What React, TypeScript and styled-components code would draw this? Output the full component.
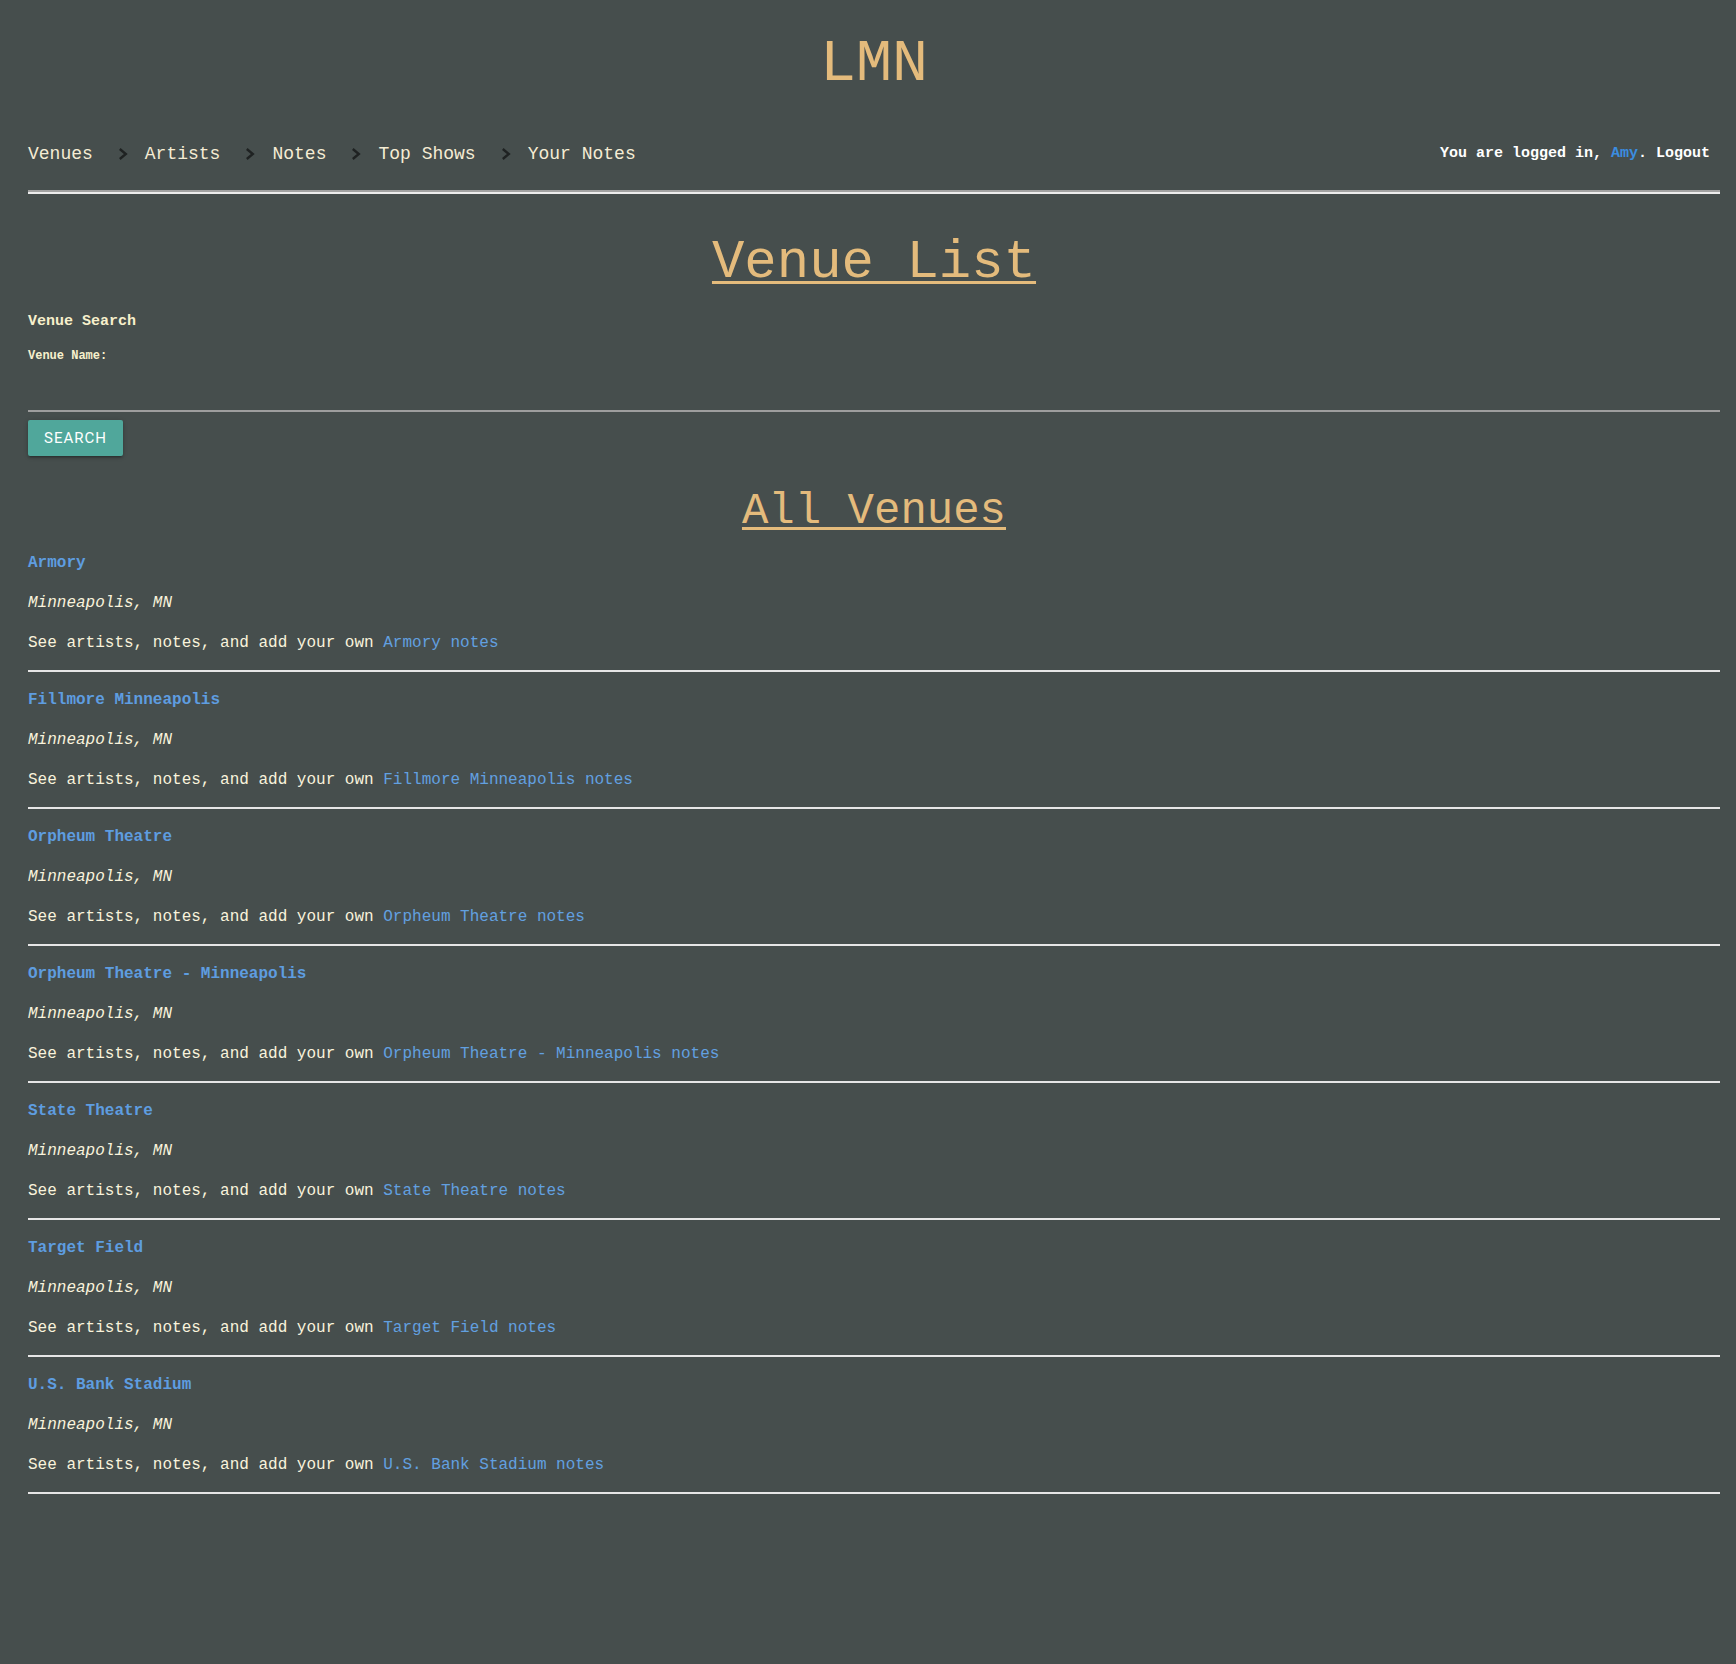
import React from "react";
import styled, { createGlobalStyle } from "styled-components";

const GlobalStyle = createGlobalStyle`
  html, body {
    margin: 0;
    padding: 0;
    background: #464e4d;
  }
  body {
    font-family: "Courier New", "Liberation Mono", monospace;
    color: #f9f3dc;
    min-height: 100vh;
  }
  * { box-sizing: border-box; }
`;

const Page = styled.div`
  padding: 0 16px 60px 28px;
  min-height: 100vh;
  background: #464e4d;
`;

const SiteTitle = styled.h1`
  margin: 30px 0 0;
  font-size: 60px;
  line-height: 68px;
  font-weight: normal;
  text-align: center;
  color: #e4bb7c;
`;

const Nav = styled.nav`
  display: flex;
  align-items: center;
  justify-content: space-between;
  padding: 44px 0 24px;
  border-bottom: 2px solid #a2a2a2;
  box-shadow: 0 2px 0 #ececec;
`;

const Crumbs = styled.div`
  display: flex;
  align-items: center;
  height: 24px;
`;

const Crumb = styled.a`
  font-size: 18px;
  line-height: 24px;
  color: #f5ecd4;
  text-decoration: none;
  white-space: pre;
`;

const Chevron = styled.svg`
  width: 10px;
  height: 12px;
  margin: 0 17px 0 25px;
  flex: none;
`;

const Login = styled.div`
  font-size: 15px;
  line-height: 24px;
  font-weight: bold;
  color: #ffffff;
  margin-right: 10px;
  white-space: pre;
`;

const UserName = styled.span`
  color: #3b8de0;
`;

const LogoutLink = styled.a`
  color: #ffffff;
  text-decoration: none;
`;

const SectionTitle = styled.h2<{ $size: number; $lh: number; $mt: number }>`
  margin: ${(p) => p.$mt}px 0 0;
  font-size: ${(p) => p.$size}px;
  line-height: ${(p) => p.$lh}px;
  font-weight: normal;
  text-align: center;
  color: #e4bb7c;
`;

const Underlined = styled.span`
  text-decoration: underline;
  text-decoration-thickness: 3px;
  text-underline-offset: 4px;
`;

const SearchForm = styled.form`
  display: block;
  margin: 0;
`;

const SearchTitle = styled.div`
  margin-top: 19px;
  font-size: 15px;
  line-height: 20px;
  font-weight: bold;
  color: #f7f0cc;
`;

const FieldLabel = styled.label`
  display: block;
  margin-top: 16px;
  font-size: 12px;
  line-height: 16px;
  font-weight: bold;
  color: #f7f0cc;
`;

const TextInput = styled.input`
  display: block;
  width: 100%;
  height: 46px;
  box-sizing: content-box;
  padding: 0;
  margin: 0;
  border: none;
  border-bottom: 2px solid #9e9e9e;
  background: transparent;
  color: #f9f3dc;
  font-family: inherit;
  font-size: 16px;
  outline: none;
`;

const SearchButton = styled.button`
  display: block;
  margin-top: 8px;
  height: 36px;
  padding: 0 16px;
  border: none;
  border-radius: 2px;
  background: #50a79b;
  color: #ffffff;
  font-family: Roboto, "Liberation Sans", sans-serif;
  font-size: 15px;
  letter-spacing: 1px;
  text-transform: uppercase;
  line-height: 36px;
  box-shadow: 0 2px 2px 0 rgba(0, 0, 0, 0.14), 0 3px 1px -2px rgba(0, 0, 0, 0.12),
    0 1px 5px 0 rgba(0, 0, 0, 0.2);
  cursor: pointer;
`;

const VenueList = styled.div`
  margin-top: 0;
`;

const VenueItem = styled.div`
  padding: 8px 0 7px;
  border-bottom: 2px solid #e6e6e6;
`;

const Line = styled.div`
  font-size: 16px;
  line-height: 40px;
  white-space: pre;
`;

const VenueName = styled(Line)`
  font-weight: bold;
  color: #5e9de0;
`;

const VenueCity = styled(Line)`
  font-style: italic;
  color: #f9f3dc;
`;

const VenueDesc = styled(Line)`
  color: #f9f3dc;
`;

const NotesLink = styled.a`
  color: #62a0e0;
  text-decoration: none;
`;

const crumbs = ["Venues", "Artists", "Notes", "Top Shows", "Your Notes"];

const venues = [
  "Armory",
  "Fillmore Minneapolis",
  "Orpheum Theatre",
  "Orpheum Theatre - Minneapolis",
  "State Theatre",
  "Target Field",
  "U.S. Bank Stadium",
];

const ChevronIcon = () => (
  <Chevron viewBox="0 0 10 12" aria-hidden="true">
    <polyline
      points="1.8,1 7.8,6 1.8,11"
      fill="none"
      stroke="#1f2222"
      strokeWidth="2.4"
    />
  </Chevron>
);

export default function App() {
  return (
    <>
      <GlobalStyle />
      <Page>
        <SiteTitle>LMN</SiteTitle>
        <Nav>
          <Crumbs>
            {crumbs.map((c, i) => (
              <React.Fragment key={c}>
                {i > 0 && <ChevronIcon />}
                <Crumb href="#">{c}</Crumb>
              </React.Fragment>
            ))}
          </Crumbs>
          <Login>
            You are logged in, <UserName>Amy</UserName>.{" "}
            <LogoutLink href="#">Logout</LogoutLink>
          </Login>
        </Nav>

        <SectionTitle as="h2" $size={54} $lh={60} $mt={41}>
          <Underlined>Venue List</Underlined>
        </SectionTitle>

        <SearchForm onSubmit={(e) => e.preventDefault()}>
          <SearchTitle>Venue Search</SearchTitle>
          <FieldLabel htmlFor="venue-name">Venue Name:</FieldLabel>
          <TextInput id="venue-name" type="text" />
          <SearchButton type="submit">Search</SearchButton>
        </SearchForm>

        <SectionTitle as="h3" $size={44} $lh={48} $mt={31}>
          <Underlined>All Venues</Underlined>
        </SectionTitle>

        <VenueList>
          {venues.map((v) => (
            <VenueItem key={v}>
              <VenueName>{v}</VenueName>
              <VenueCity>Minneapolis, MN</VenueCity>
              <VenueDesc>
                See artists, notes, and add your own{" "}
                <NotesLink href="#">{v} notes</NotesLink>
              </VenueDesc>
            </VenueItem>
          ))}
        </VenueList>
      </Page>
    </>
  );
}
